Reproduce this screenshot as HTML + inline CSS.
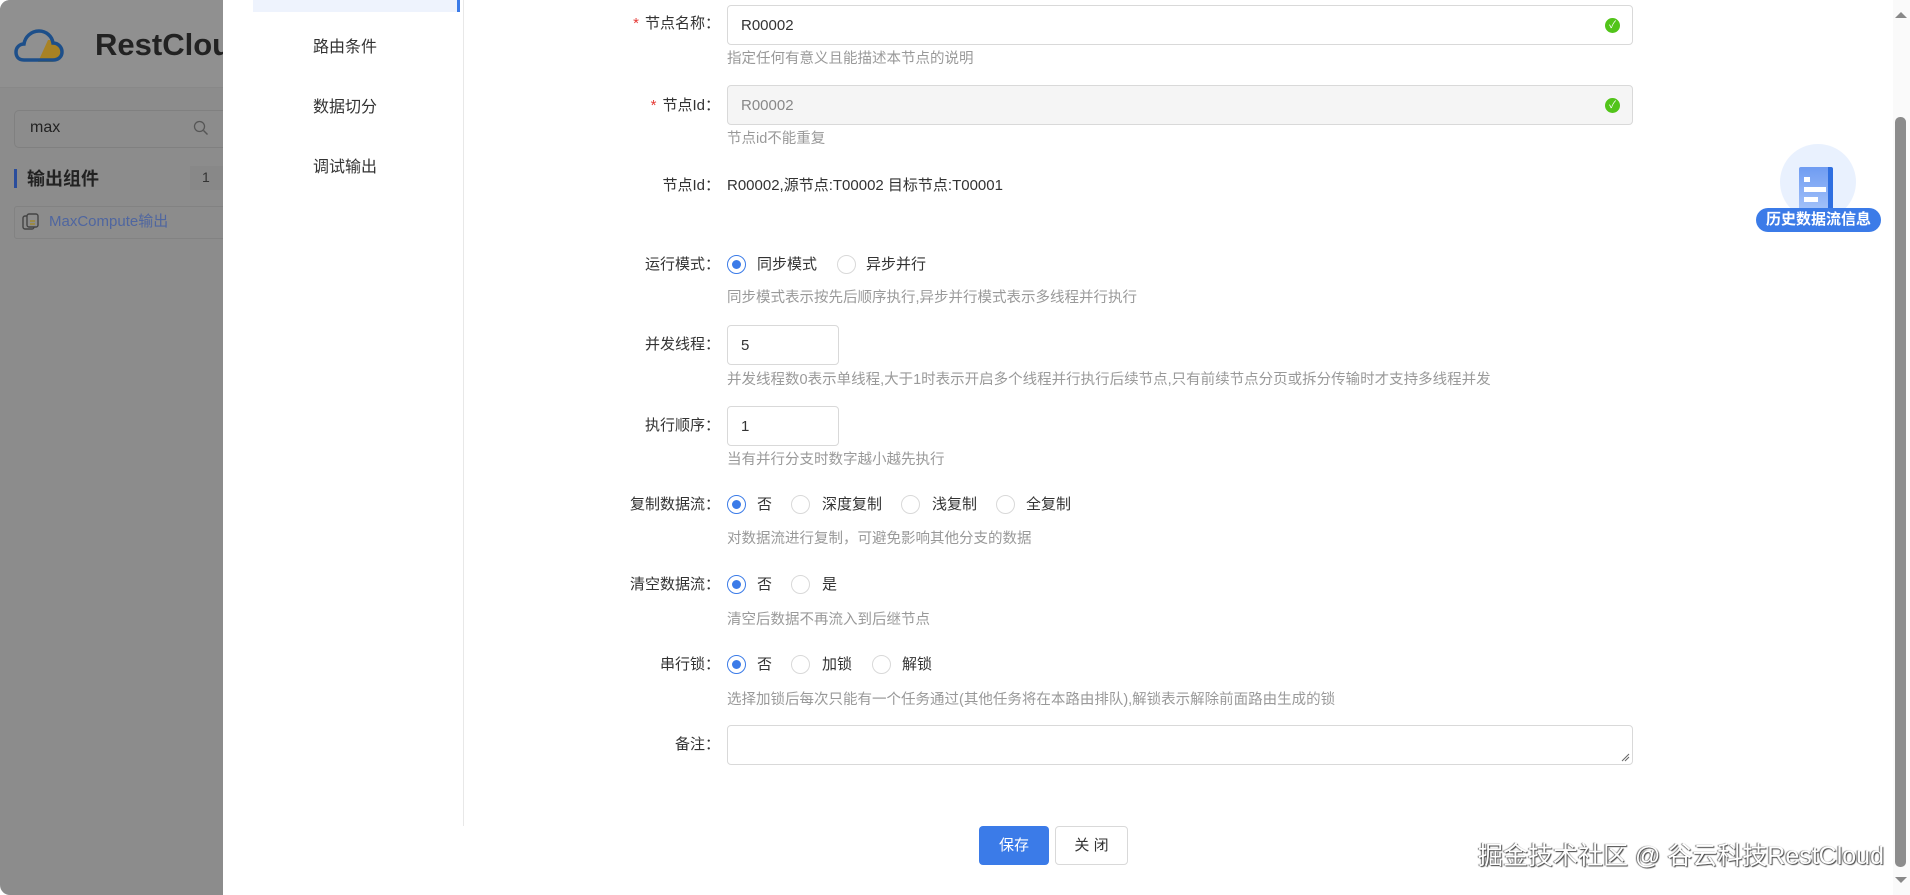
<!DOCTYPE html>
<html><head><meta charset="utf-8">
<style>
*{box-sizing:border-box;margin:0;padding:0}
body{width:1910px;height:895px;overflow:hidden;position:relative;background:#fff;font-family:"Liberation Sans","Noto Sans CJK SC",sans-serif;color:#333}
.a{position:absolute}
.lbl{position:absolute;right:1190px;font-size:15px;color:#333;white-space:nowrap;line-height:20px}
.req{color:#e53935;margin-right:6px}
.inp{position:absolute;left:727px;border:1px solid #d9d9d9;border-radius:4px;background:#fff;font-size:15px;color:#333;padding-left:13px;display:flex;align-items:center}
.help{position:absolute;left:727px;font-size:14.5px;color:#999;line-height:20px;white-space:nowrap}
.rad{position:absolute;width:19px;height:19px;border-radius:50%;border:1px solid #d9d9d9;background:#fff}
.rad.on{border-color:#3b7be8}
.rad.on:after{content:"";position:absolute;left:4px;top:4px;width:9px;height:9px;border-radius:50%;background:#3b7be8}
.rt{position:absolute;font-size:15px;color:#333;line-height:20px;white-space:nowrap}
.ok{position:absolute;right:12px;width:15px;height:15px;border-radius:50%;background:#52c41a;color:#fff;font-size:10px;line-height:15px;text-align:center}
.nav{position:absolute;left:313px;font-size:16px;color:#333;line-height:22px}
</style></head><body>
<!-- left dimmed app -->
<div class="a" style="left:0;top:0;width:223px;height:895px;overflow:hidden;background:#8c8c8c;border-radius:10px 0 0 10px">
<div class="a" style="left:0;top:0;width:223px;height:88px;background:#909090;border-bottom:1px solid #888"></div>
<svg class="a" style="left:14px;top:24px" width="60" height="40" viewBox="0 0 60 40"><path d="M34 16c8 0 14 5 14 12s-5 10-12 10H24z" fill="#a88224"/><path d="M10 36c-6 0-8-4-8-8 0-5 4-8 8-8 1-7 7-13 15-13 7 0 13 5 14 12 5 0 9 4 9 9s-4 8-9 8z" fill="none" stroke="#1d4f8a" stroke-width="3.5"/></svg>
<div class="a" style="left:95px;top:25px;font-size:31px;font-weight:bold;color:#222;white-space:nowrap;line-height:40px">RestCloud</div>
<div class="a" style="left:14px;top:110px;width:230px;height:38px;border:1px solid #808080;border-radius:5px;font-size:16px;color:#222;padding:8px 15px">max</div>
<svg class="a" style="left:193px;top:120px" width="16" height="16"><circle cx="6.5" cy="6.5" r="5" fill="none" stroke="#555" stroke-width="1.3"/><path d="M10.5 10.5l4 4" stroke="#555" stroke-width="1.4"/></svg>
<div class="a" style="left:14px;top:169px;width:3px;height:19px;background:#2a4d9c"></div>
<div class="a" style="left:27px;top:166px;font-size:18px;font-weight:bold;color:#222;line-height:26px">输出组件</div>
<div class="a" style="left:190px;top:166px;width:40px;height:24px;background:#888;font-size:14px;color:#333;padding:3px 12px">1</div>
<div class="a" style="left:14px;top:206px;width:230px;height:33px;border:1px solid #828282;border-radius:3px"></div>
<svg class="a" style="left:22px;top:213px" width="18" height="18"><rect x="1" y="3" width="11" height="13" rx="2" fill="none" stroke="#444" stroke-width="1.4"/><rect x="5" y="1" width="11" height="13" rx="2" fill="#8c8c8c" stroke="#444" stroke-width="1.4"/><path d="M8 8h5M8 11h5" stroke="#a08a30" stroke-width="1.4"/></svg>
<div class="a" style="left:49px;top:212px;font-size:15px;color:#4f66a0;line-height:20px">MaxCompute输出</div>
</div>
<div class="a" style="left:223px;top:0;width:1687px;height:895px;background:#fff"></div>

<!-- modal nav -->
<div class="a" style="left:253px;top:0;width:207px;height:12px;background:#eef3fd;border-right:3px solid #3b7be8"></div>
<div class="a" style="left:463px;top:0;width:1px;height:826px;background:#e8e8e8"></div>
<div class="nav" style="top:37px">路由条件</div>
<div class="nav" style="top:97px">数据切分</div>
<div class="nav" style="top:157px">调试输出</div>

<!-- form -->
<div class="lbl" style="top:14px"><span class="req">*</span>节点名称：</div>
<div class="inp" style="top:5px;width:906px;height:40px">R00002<span class="ok">✓</span></div>
<div class="help" style="top:49px">指定任何有意义且能描述本节点的说明</div>

<div class="lbl" style="top:96px"><span class="req">*</span>节点Id：</div>
<div class="inp" style="top:85px;width:906px;height:40px;background:#f5f5f5;color:#888">R00002<span class="ok">✓</span></div>
<div class="help" style="top:129px">节点id不能重复</div>

<div class="lbl" style="top:176px">节点Id：</div>
<div class="rt" style="left:727px;top:176px">R00002,源节点:T00002 目标节点:T00001</div>

<div class="lbl" style="top:255px">运行模式：</div>
<div class="rad on" style="left:727px;top:255px"></div><div class="rt" style="left:757px;top:255px">同步模式</div>
<div class="rad" style="left:837px;top:255px"></div><div class="rt" style="left:866px;top:255px">异步并行</div>
<div class="help" style="top:288px">同步模式表示按先后顺序执行,异步并行模式表示多线程并行执行</div>

<div class="lbl" style="top:335px">并发线程：</div>
<div class="inp" style="top:325px;width:112px;height:40px">5</div>
<div class="help" style="top:370px">并发线程数0表示单线程,大于1时表示开启多个线程并行执行后续节点,只有前续节点分页或拆分传输时才支持多线程并发</div>

<div class="lbl" style="top:416px">执行顺序：</div>
<div class="inp" style="top:406px;width:112px;height:40px">1</div>
<div class="help" style="top:450px">当有并行分支时数字越小越先执行</div>

<div class="lbl" style="top:495px">复制数据流：</div>
<div class="rad on" style="left:727px;top:495px"></div><div class="rt" style="left:757px;top:495px">否</div>
<div class="rad" style="left:791px;top:495px"></div><div class="rt" style="left:822px;top:495px">深度复制</div>
<div class="rad" style="left:901px;top:495px"></div><div class="rt" style="left:932px;top:495px">浅复制</div>
<div class="rad" style="left:996px;top:495px"></div><div class="rt" style="left:1026px;top:495px">全复制</div>
<div class="help" style="top:529px">对数据流进行复制，可避免影响其他分支的数据</div>

<div class="lbl" style="top:575px">清空数据流：</div>
<div class="rad on" style="left:727px;top:575px"></div><div class="rt" style="left:757px;top:575px">否</div>
<div class="rad" style="left:791px;top:575px"></div><div class="rt" style="left:822px;top:575px">是</div>
<div class="help" style="top:610px">清空后数据不再流入到后继节点</div>

<div class="lbl" style="top:655px">串行锁：</div>
<div class="rad on" style="left:727px;top:655px"></div><div class="rt" style="left:757px;top:655px">否</div>
<div class="rad" style="left:791px;top:655px"></div><div class="rt" style="left:822px;top:655px">加锁</div>
<div class="rad" style="left:872px;top:655px"></div><div class="rt" style="left:902px;top:655px">解锁</div>
<div class="help" style="top:690px">选择加锁后每次只能有一个任务通过(其他任务将在本路由排队),解锁表示解除前面路由生成的锁</div>

<div class="lbl" style="top:735px">备注：</div>
<div class="inp" style="top:725px;width:906px;height:40px"></div>
<svg class="a" style="left:1621px;top:753px" width="9" height="9"><path d="M1 8L8 1M4 8L8 4" stroke="#666" stroke-width="1"/></svg>

<div class="a" style="left:979px;top:826px;width:70px;height:39px;background:#3b7be8;border-radius:4px;color:#fff;font-size:15px;text-align:center;line-height:39px">保存</div>
<div class="a" style="left:1055px;top:826px;width:73px;height:39px;border:1px solid #d9d9d9;border-radius:4px;color:#333;font-size:15px;text-align:center;line-height:37px">关 闭</div>

<!-- history -->
<div class="a" style="left:1780px;top:144px;width:76px;height:76px;border-radius:50%;background:#e9f1fe"></div>
<div class="a" style="left:1799px;top:167px;width:34px;height:48px;background:linear-gradient(#6f9cf2,#a9c6fa);border-right:5px solid #2f6fe0;border-radius:2px"></div>
<div class="a" style="left:1804px;top:177px;width:6px;height:5px;background:#fff"></div>
<div class="a" style="left:1804px;top:187px;width:22px;height:5px;background:#fff"></div>
<div class="a" style="left:1804px;top:197px;width:14px;height:5px;background:#fff"></div>
<div class="a" style="left:1756px;top:208px;width:125px;height:24px;border-radius:12px;background:#3b7be8;color:#fff;font-size:15px;font-weight:bold;text-align:center;line-height:24px">历史数据流信息</div>

<!-- scrollbar -->
<div class="a" style="left:1893px;top:0;width:17px;height:895px;background:#fafafa"></div>
<div class="a" style="left:1895px;top:117px;width:11px;height:750px;background:#8c8c8c;border-radius:5px"></div>
<div class="a" style="left:1895px;top:12px;width:0;height:0;border-left:6px solid transparent;border-right:6px solid transparent;border-bottom:6px solid #888"></div>
<div class="a" style="left:1895px;top:877px;width:0;height:0;border-left:6px solid transparent;border-right:6px solid transparent;border-top:6px solid #888"></div>

<div class="a" style="left:1478px;top:841px;font-size:25px;color:#fff;white-space:nowrap;line-height:30px;text-shadow:1px 1px 1px #444,-1px 0 1px #666">掘金技术社区 @ 谷云科技RestCloud</div>
</body></html>
